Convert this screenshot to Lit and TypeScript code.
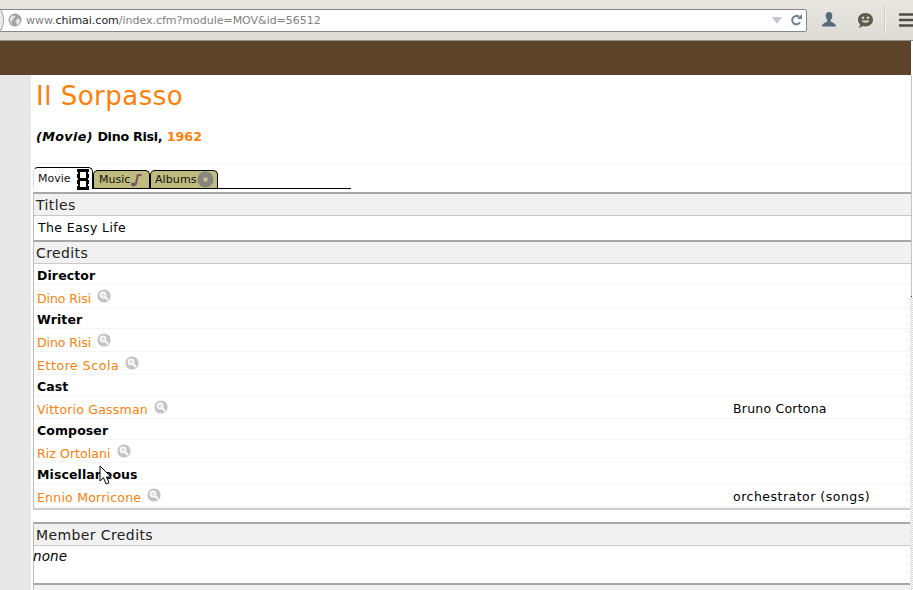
import { LitElement, html, css } from "lit";
import { customElement } from "lit/decorators.js";

const lens = html`<svg class="lens" width="14" height="14" viewBox="0 0 14 14"><circle cx="7" cy="7" r="6.6" fill="#c4c4c4"/><circle cx="6" cy="6" r="2.8" fill="#e2e2e2" stroke="#fff" stroke-width="1.2"/><path d="M8.2 8.2l3 3" stroke="#fff" stroke-width="1.8"/></svg>`;

type Row = { t: string; bold?: boolean; role?: string; ls?: number; roleLs?: number };
const rows: Row[] = [
  { t: "Director", bold: true },
  { t: "Dino Risi", ls: -0.07 },
  { t: "Writer", bold: true },
  { t: "Dino Risi", ls: -0.07 },
  { t: "Ettore Scola", ls: 0.57 },
  { t: "Cast", bold: true },
  { t: "Vittorio Gassman", role: "Bruno Cortona", ls: 0.21, roleLs: 0.22 },
  { t: "Composer", bold: true },
  { t: "Riz Ortolani", ls: 0.07 },
  { t: "Miscellaneous", bold: true },
  { t: "Ennio Morricone", role: "orchestrator (songs)", ls: 0.22, roleLs: 0.5 },
];

@customElement("app-root")
export class AppRoot extends LitElement {
  static styles = css`
    :host { display: block; width: 913px; height: 590px; overflow: hidden; position: relative; background: #fff; font-family: "DejaVu Sans", sans-serif; color: #000; }
    .toolbar { height: 41px; box-sizing: border-box; background: linear-gradient(#e9e7e2, #dcdad4); border-bottom: 1px solid #8f8f8b; display: flex; align-items: center; overflow: hidden; }
    .back { position: absolute; left: -20px; top: 4px; width: 22px; height: 30px; border-radius: 50%; border: 1px solid #a5a5a2; background: #ecebe7; }
    .url { margin-left: -6px; width: 813px; height: 23px; box-sizing: border-box; background: #fff; border: 1px solid #85878a; border-radius: 2px; display: flex; align-items: center; font: 11px "DejaVu Sans", sans-serif; color: #808080; padding-left: 13px; flex: none; }
    .url b { font-weight: normal; color: #222; }
    .addr { margin-left: 4px; flex: 1; letter-spacing: -.02px; }
    .drop { margin-right: 8px; }
    .reload { margin-right: 4px; }
    .person { margin-left: 14px; flex: none; }
    .chat { margin-left: 20px; flex: none; }
    .sep { margin-left: 10px; width: 2px; height: 30px; background: #cfcdc7; border-right: 1px solid #f2f1ee; box-sizing: border-box; flex: none; }
    .burger { margin-left: 13px; flex: none; }
    .brown { height: 34px; width: 911px; background: #5c432a; }
    .page { display: flex; height: 515px; }
    .gutter { width: 31px; background: #e8e8e8; flex: none; }
    .main { flex: 1; padding-left: 2px; min-width: 0; margin-right: 2px; }
    .edge { position: absolute; left: 911px; top: 75px; width: 1px; height: 221px; background: #c9c6b8; border-bottom: 1px solid #333; }
    .dither { position: absolute; left: 910px; top: 297px; width: 3px; height: 293px; background: repeating-conic-gradient(#d6d6d6 0 25%, #fff 0 50%) 0 0 / 2px 2px; }
    h1 { margin: 0; padding: 5px 0 0 3px; height: 36px; font: 400 26px/33px "DejaVu Sans", sans-serif; color: #ff7f0a; letter-spacing: .5px; }
    .sub { padding: 12px 0 0 3px; height: 34px; box-sizing: border-box; font: 700 12.7px/18px "DejaVu Sans", sans-serif; }
    .sub i { font-style: italic; letter-spacing: .4px; }
    .sub em { font-style: normal; letter-spacing: -.3px; }
    .sub span { color: #ff7f0a; }
    .rule { height: 1px; background: #f4f4f4; margin-top: 13px; }
    .tabs { display: flex; align-items: flex-end; height: 25px; width: 318px; box-sizing: border-box; border-bottom: 1px solid #000; }
    .tab { box-sizing: border-box; display: flex; align-items: center; border: 1px solid #000; border-bottom: 0; border-radius: 5px 5px 0 0; font-size: 11px; height: 18px; background: #bfba7e; padding-left: 5px; color: #111; }
    .tab.on { background: #fff; height: 22px; width: 60px; margin-bottom: -1px; padding-left: 4px; border-left-color: #ddd; gap: 6px; }
    .tab.on svg { margin-top: 1px; }
    .tab.m { width: 57px; }
    .tab.a { width: 68px; padding-left: 4px; letter-spacing: .1px; }
    .tab.a svg { margin-top: -1px; flex: none; }
    .box { border-left: 1px solid #bbb; }
    .head { box-sizing: border-box; height: 24px; background: #f1f1f1; border-top: 2px solid #a8a8a8; border-bottom: 1px solid #c9c9c9; padding-left: 2px; font: 14px/23px "DejaVu Sans", sans-serif; color: #222; letter-spacing: .4px; }
    .titles { margin-top: 3px; }
    .titleRow { height: 24px; box-sizing: border-box; font-size: 12.5px; line-height: 23px; padding-left: 4px; letter-spacing: .38px; }
    .row { display: flex; box-sizing: border-box; height: 23px; border-bottom: 1px solid #f5f5f5; font-size: 12.5px; padding: 1px 0 0 3px; align-items: center; }
    .row.b { height: 21px; padding-top: 2px; font-weight: 700; letter-spacing: .1px; }
    .name { color: #fb8008; padding-top: 3px; }
    .lens { margin: -2px 0 0 6px; flex: none; }
    .role { position: absolute; left: 733px; margin-top: 2px; }
    .credits { border-bottom: 2px solid #ccc; padding-bottom: 1px; }
    .member { margin-top: 12px; }
    .none { height: 37px; margin-left: -1px; font: italic 13.5px/21px "DejaVu Sans", sans-serif; letter-spacing: .1px; }
    .tail { height: 10px; }
    .cursor { position: absolute; left: 99px; top: 465px; }
  `;

  render() {
    return html`
      <div class="toolbar">
        <div class="url">
          <svg width="14" height="14" viewBox="0 0 14 14"><circle cx="7" cy="7" r="6.5" fill="#a0a2a4"/><path d="M2 5c2-3 4-3 5-2s-1 2-2 3-2 3-1 5-3-3-2-6zM9 6c2-1 3 0 3 2s-2 4-3 4 0-2-1-3 0-2 1-3z" fill="#e4e4e4"/></svg>
          <span class="addr">www.<b>chimai.com</b>/index.cfm?module=MOV&amp;id=56512</span>
          <svg class="drop" width="10" height="7" viewBox="0 0 10 7"><path d="M0 0h10L5 7z" fill="#c3c8d0"/></svg>
          <svg class="reload" width="12" height="12" viewBox="0 0 12 12"><path d="M10 8.2A4.2 4.2 0 1 1 9 2.8" fill="none" stroke="#6f8195" stroke-width="2"/><path d="M7 5h5V0z" fill="#6f8195"/></svg>
        </div>
        <svg class="person" width="16" height="16" viewBox="0 0 16 16"><path d="M8 0c2.400 0 3.500 2 3.300 4.200-.2 2-1 3.300-1.800 4 .1 1.400 1 1.800 3 2.700 1.800.8 2.500 1.700 2.500 3.600H1c0-1.900.7-2.800 2.500-3.600 2-.9 2.900-1.300 3-2.700-.8-.7-1.600-2-1.800-4C4.500 2 5.600 0 8 0z" fill="#56697f"/></svg>
        <svg class="chat" width="17" height="17" viewBox="0 0 17 17"><path d="M8.500 1c4.200 0 7.500 2.800 7.500 6.700s-3.300 6.700-7.500 6.700c-.9 0-1.700-.1-2.500-.4L2 16l1.200-3.600C1.800 11.200 1 9.600 1 7.700 1 3.800 4.300 1 8.500 1z" fill="#5e5a4e"/><circle cx="6" cy="5.800" r="1.300" fill="#d8d6cc"/><circle cx="11" cy="5.800" r="1.300" fill="#d8d6cc"/><path d="M4.500 8.500c1 3 7 3 8 0z" fill="#d8d6cc"/></svg>
        <div class="sep"></div>
        <svg class="burger" width="16" height="14" viewBox="0 0 16 14"><path d="M0 1.500h16M0 7h16M0 12.500h16" stroke="#4e4c45" stroke-width="2.600"/></svg>
      </div>
      <div class="back"></div>
      <div class="brown"></div>
      <div class="page">
        <div class="gutter"></div>
        <div class="main">
          <h1>Il Sorpasso</h1>
          <div class="sub"><i>(Movie)</i> <em>Dino Risi,</em> <span>1962</span></div>
          <div class="rule"></div>
          <div class="tabs">
            <div class="tab on">Movie
              <svg width="12" height="21" viewBox="0 0 12 21"><path d="M0 0h12v21H0z" fill="#000"/><path d="M3 3h6v6H3zM3 12h6v6H3z" fill="#fff"/><path d="M0 3h1v2H0zM11 3h1v2h-1zM0 9h1v2H0zM11 9h1v2h-1zM0 15h1v2H0zM11 15h1v2h-1z" fill="#fff"/></svg>
            </div>
            <div class="tab m">Music
              <svg width="12" height="14" viewBox="0 0 12 14"><path d="M1 10.500c1-1.200 3-1.300 4-.8L7 1h5l-.5 2H8.500L7 11c-.3 1.500-1.500 2.500-3.500 2.500S.2 12 1 10.500z" fill="#7a6470"/><path d="M2 11c1-.8 2.500-.8 3 0-.5 1-2 1.500-3 0zM7.500 2h3.500l-.2.600H8.200L6.500 10.500 6 10z" fill="#93304e"/></svg>
            </div>
            <div class="tab a">Albums
              <svg width="17" height="17" viewBox="0 0 17 17"><circle cx="8.500" cy="8.500" r="8" fill="#86857e"/><circle cx="8.500" cy="8.500" r="2.300" fill="#c4c09a"/></svg>
            </div>
          </div>
          <div class="box titles">
            <div class="head">Titles</div>
            <div class="titleRow">The Easy Life</div>
          </div>
          <div class="box credits">
            <div class="head">Credits</div>
            ${rows.map(r => r.bold
              ? html`<div class="row b">${r.t}</div>`
              : html`<div class="row"><span class="name" style="letter-spacing:${r.ls}px">${r.t}</span>${lens}${r.role ? html`<span class="role" style="letter-spacing:${r.roleLs}px">${r.role}</span>` : ""}</div>`)}
          </div>
          <div class="box member">
            <div class="head">Member Credits</div>
            <div class="none">none</div>
          </div>
          <div class="box"><div class="head tail"></div></div>
        </div>
      </div>
      <div class="edge"></div>
      <div class="dither"></div>
      <svg class="cursor" width="13" height="21" viewBox="0 0 13 21"><path d="M1 1v15l3.500-3.300L7 19l3-1.300-2.500-5.700H12z" fill="#fff" stroke="#000"/></svg>
    `;
  }
}
